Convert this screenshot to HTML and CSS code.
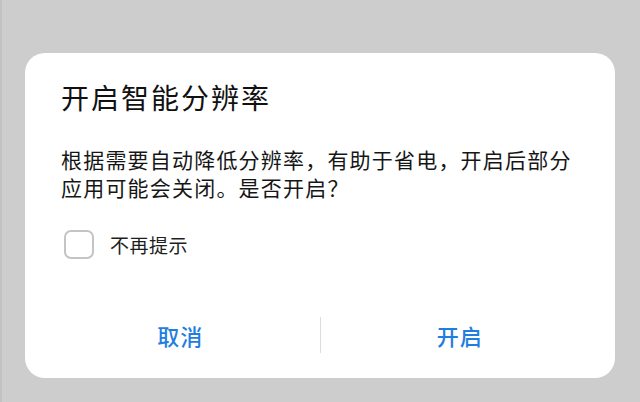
FILE: index.html
```html
<!DOCTYPE html>
<html lang="zh-CN">
<head>
<meta charset="utf-8">
<title>开启智能分辨率</title>
<link rel="stylesheet" href="styles.css">
</head>
<body>
<div class="screen">
  <div class="dialog">
    <h1 class="title">开启智能分辨率</h1>
    <p class="message">根据需要自动降低分辨率，有助于省电，开启后部分<br>应用可能会关闭。是否开启？</p>
    <label class="check-row">
      <span class="checkbox"></span>
      <span class="check-label">不再提示</span>
    </label>
    <div class="actions">
      <button class="action">取消</button>
      <span class="divider"></span>
      <button class="action">开启</button>
    </div>
  </div>
</div>
</body>
</html>
```
FILE: styles.css
```css
html, body {
  margin: 0;
  padding: 0;
}
body {
  width: 640px;
  height: 402px;
  overflow: hidden;
  background: #cdcdcd;
  font-family: "Noto Sans CJK SC", "Noto Sans", sans-serif;
}
.screen {
  box-sizing: border-box;
  height: 402px;
  border-left: 2px solid #c2c2c2;
  padding: 53px 0 0 23px;
}
.dialog {
  box-sizing: border-box;
  width: 590px;
  height: 325px;
  background: #ffffff;
  border-radius: 20px;
  padding: 26px 16px 0 16px;
  display: flex;
  flex-direction: column;
}
.title {
  margin: 0 0 0 20px;
  font-size: 28px;
  line-height: 36px;
  font-weight: 400;
  letter-spacing: 2px;
  color: #111111;
}
.message {
  margin: 30px 0 0 20px;
  font-size: 21px;
  line-height: 28px;
  letter-spacing: 1.2px;
  color: #161616;
}
.check-row {
  margin: 29px 0 0 23px;
  display: flex;
  align-items: center;
  gap: 16px;
}
.checkbox {
  box-sizing: border-box;
  width: 30px;
  height: 29px;
  border: 2px solid #c4c4c4;
  border-radius: 7px;
  background: #fff;
}
.check-label {
  font-size: 19px;
  line-height: 29px;
  color: #1e1e1e;
  letter-spacing: 0.5px;
}
.actions {
  margin-top: 58px;
  height: 36px;
  display: flex;
  align-items: center;
}
.action {
  flex: 1;
  border: 0;
  background: transparent;
  padding: 0;
  font-family: inherit;
  font-size: 22px;
  line-height: 36px;
  font-weight: 500;
  letter-spacing: 1px;
  color: #1f7ee0;
}
.divider {
  width: 1px;
  height: 36px;
  background: #dddddd;
}
```
